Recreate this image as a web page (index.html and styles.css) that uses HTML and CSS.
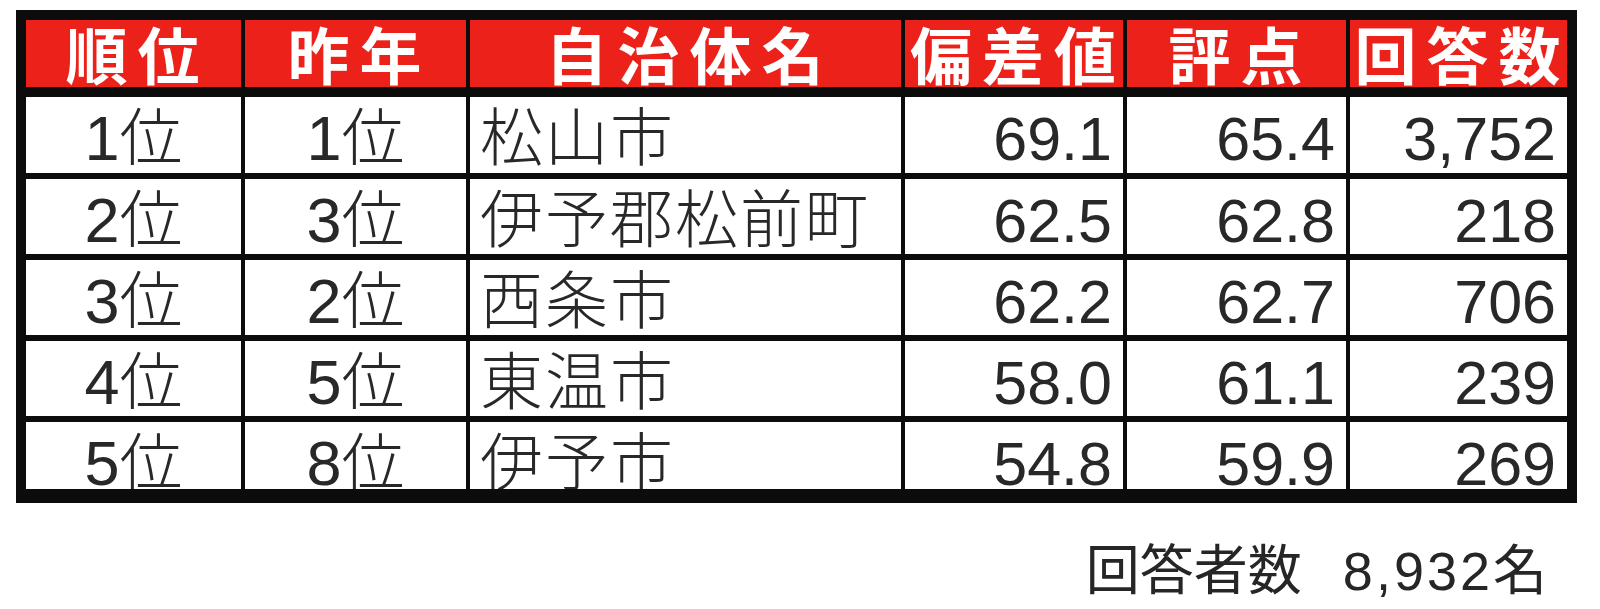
FILE: index.html
```html
<!DOCTYPE html>
<html lang="ja">
<head>
<meta charset="utf-8">
<title>ランキング</title>
<link rel="stylesheet" href="styles.css">
</head>
<body>
<div class="page">
  <div class="table">
    <div class="row head">
      <div class="cell">順位</div>
      <div class="cell">昨年</div>
      <div class="cell">自治体名</div>
      <div class="cell">偏差値</div>
      <div class="cell">評点</div>
      <div class="cell">回答数</div>
    </div>
    <div class="row body r1">
      <div class="cell c">1位</div>
      <div class="cell c">1位</div>
      <div class="cell l">松山市</div>
      <div class="cell n">69.1</div>
      <div class="cell n">65.4</div>
      <div class="cell n">3,752</div>
    </div>
    <div class="row body">
      <div class="cell c">2位</div>
      <div class="cell c">3位</div>
      <div class="cell l">伊予郡松前町</div>
      <div class="cell n">62.5</div>
      <div class="cell n">62.8</div>
      <div class="cell n">218</div>
    </div>
    <div class="row body">
      <div class="cell c">3位</div>
      <div class="cell c">2位</div>
      <div class="cell l">西条市</div>
      <div class="cell n">62.2</div>
      <div class="cell n">62.7</div>
      <div class="cell n">706</div>
    </div>
    <div class="row body">
      <div class="cell c">4位</div>
      <div class="cell c">5位</div>
      <div class="cell l">東温市</div>
      <div class="cell n">58.0</div>
      <div class="cell n">61.1</div>
      <div class="cell n">239</div>
    </div>
    <div class="row body last">
      <div class="cell c">5位</div>
      <div class="cell c">8位</div>
      <div class="cell l">伊予市</div>
      <div class="cell n">54.8</div>
      <div class="cell n">59.9</div>
      <div class="cell n">269</div>
    </div>
  </div>
  <div class="footer">回答者数 <span class="num">8,932</span>名</div>
</div>
</body>
</html>
```

FILE: styles.css
```css
html, body {
  margin: 0;
  padding: 0;
  background: #ffffff;
}

.page {
  width: 1561px;
  padding: 10px 23px 0 16px;
  font-family: "Liberation Sans", "Noto Sans CJK JP", sans-serif;
}

.table {
  background: #0c0c0c;
  padding: 10px 10px 14px 10px;
  display: flex;
  flex-direction: column;
  gap: 6px;
}

.row {
  display: grid;
  grid-template-columns: 215px 221px 431px 218px 219px 217px;
  column-gap: 4px;
}

.cell {
  overflow: hidden;
  white-space: nowrap;
  line-height: 1;
  box-sizing: border-box;
}

.head {
  height: 67px;
  margin-bottom: 4px;
}

.head .cell {
  display: flex;
  justify-content: center;
  background: #ec2119;
  color: #ffffff;
  font-weight: 700;
  font-size: 62px;
  line-height: 56px;
  letter-spacing: 10px;
  padding-top: 11px;
  padding-left: 8px;
}

.body {
  height: 75px;
}

.body.r1 {
  height: 76px;
}

.body.last {
  height: 67px;
}

.body .cell {
  background: #ffffff;
  color: #282828;
  font-size: 63px;
  font-weight: 300;
  padding-top: 10px;
}

.body .c {
  text-align: center;
}

.body .l {
  text-align: left;
  padding-left: 10px;
  letter-spacing: 2px;
}

.body .n {
  text-align: right;
  font-size: 61px;
  padding-top: 12px;
  padding-right: 11px;
}

.footer {
  margin-top: 41px;
  padding-right: 30px;
  text-align: right;
  font-size: 54px;
  line-height: 1;
  color: #262626;
}

.footer .num {
  margin-left: 26px;
  letter-spacing: 3px;
}
```
